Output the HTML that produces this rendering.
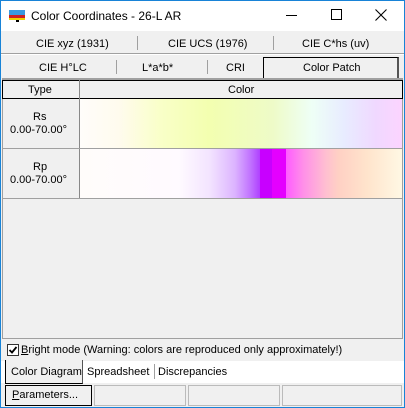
<!DOCTYPE html>
<html><head><style>
*{box-sizing:border-box;margin:0;padding:0}
body{width:405px;height:408px;background:#f0f0f0;font-family:"Liberation Sans",sans-serif;font-size:11px;color:#000;position:relative;overflow:hidden}
.abs{position:absolute}
.win{left:0;top:0;width:405px;height:408px;border:1px solid #1883d7}
.t{white-space:nowrap}
</style></head><body>
<div class="abs win"></div>
<div class="abs" style="left:1px;top:1px;width:403px;height:30px;background:#fff"></div>
<div class="abs" style="left:9px;top:10px;width:16px;height:5px;background:#3a9adf"></div>
<div class="abs" style="left:9px;top:15px;width:16px;height:3px;background:#d02020"></div>
<div class="abs" style="left:9px;top:18px;width:16px;height:2px;background:#f0d000"></div>
<div class="abs" style="left:16px;top:20px;width:3px;height:2px;background:#000"></div>
<div class="abs t" style="left:31px;top:9px;font-size:12px">Color Coordinates - 26-L AR</div>
<div class="abs" style="left:286px;top:15px;width:11px;height:1px;background:#000"></div>
<div class="abs" style="left:331px;top:9px;width:11px;height:11px;border:1px solid #000"></div>
<svg class="abs" style="left:375px;top:9px" width="12" height="12"><path d="M0.5 0.5L11.5 11.5M11.5 0.5L0.5 11.5" stroke="#000" stroke-width="1.1"/></svg>
<div class="abs t" style="left:36px;top:38px">CIE xyz (1931)</div>
<div class="abs" style="left:137px;top:36px;width:1px;height:14px;background:#a0a0a0"></div>
<div class="abs t" style="left:168px;top:38px">CIE UCS (1976)</div>
<div class="abs" style="left:273px;top:36px;width:1px;height:14px;background:#a0a0a0"></div>
<div class="abs t" style="left:302px;top:38px">CIE C*hs (uv)</div>
<div class="abs" style="left:1px;top:53px;width:403px;height:1px;background:#a0a0a0"></div>
<div class="abs" style="left:1px;top:54px;width:403px;height:1px;background:#fff"></div>
<div class="abs t" style="left:39px;top:62px">CIE H°LC</div>
<div class="abs" style="left:116px;top:60px;width:1px;height:14px;background:#a0a0a0"></div>
<div class="abs t" style="left:142px;top:62px">L*a*b*</div>
<div class="abs" style="left:207px;top:60px;width:1px;height:14px;background:#a0a0a0"></div>
<div class="abs t" style="left:226px;top:62px">CRI</div>
<div class="abs" style="left:263px;top:57px;width:136px;height:22px;border:1px solid #000;border-bottom:none;border-right:2px solid #555;background:#f0f0f0"></div>
<div class="abs t" style="left:303px;top:62px">Color Patch</div>
<div class="abs" style="left:2px;top:78px;width:401px;height:2px;background:#a0a0a0"></div>
<div class="abs" style="left:2px;top:80px;width:401px;height:19px;border:1px solid #000;background:#f0f0f0"></div>
<div class="abs" style="left:79px;top:80px;width:1px;height:119px;background:#888"></div>
<div class="abs t" style="left:28px;top:84px">Type</div>
<div class="abs t" style="left:228px;top:84px">Color</div>
<div class="abs" style="left:80px;top:99px;width:322px;height:49px;background:linear-gradient(90deg,#fffdfa 0%,#fffbee 12%,#f9ffc8 25%,#f3ffb0 40%,#eefbc8 60%,#eefff6 72%,#e8ecff 82%,#f0d8ff 92%,#fcd4ff 100%)"></div>
<div class="abs" style="left:2px;top:148px;width:400px;height:1px;background:#a0a0a0"></div>
<div class="abs" style="left:80px;top:149px;width:180px;height:49px;background:linear-gradient(90deg,#fffcfa 0%,#fffaff 55%,#f3e4ff 72%,#dcb4ff 86%,#c070ff 95%,#b040ff 100%)"></div>
<div class="abs" style="left:260px;top:149px;width:12px;height:49px;background:#c800ff"></div>
<div class="abs" style="left:272px;top:149px;width:14px;height:49px;background:#e400ff"></div>
<div class="abs" style="left:286px;top:149px;width:116px;height:49px;background:linear-gradient(90deg,#ff5cff 0%,#ff90e8 15%,#ffc0d0 35%,#ffd0c4 45%,#ffe4cc 70%,#fff8e4 100%)"></div>
<div class="abs" style="left:2px;top:198px;width:400px;height:1px;background:#a0a0a0"></div>
<div class="abs" style="left:2px;top:99px;width:1px;height:240px;background:#a0a0a0"></div>
<div class="abs" style="left:402px;top:99px;width:1px;height:240px;background:#a0a0a0"></div>
<div class="abs t" style="left:33px;top:111px">Rs</div>
<div class="abs t" style="left:10px;top:124px">0.00-70.00°</div>
<div class="abs t" style="left:33px;top:161px">Rp</div>
<div class="abs t" style="left:10px;top:174px">0.00-70.00°</div>
<div class="abs" style="left:2px;top:338px;width:401px;height:1px;background:#a0a0a0"></div>
<div class="abs" style="left:7px;top:344px;width:12px;height:12px;border:1px solid #333;background:#fff"></div>
<svg class="abs" style="left:8px;top:345px" width="10" height="10"><path d="M1.5 5L4 7.5L8.5 2" stroke="#000" stroke-width="1.8" fill="none"/></svg>
<div class="abs t" style="left:21px;top:344px"><u>B</u>right mode (Warning: colors are reproduced only approximately!)</div>
<div class="abs" style="left:1px;top:361px;width:403px;height:22px;background:#fff"></div>
<div class="abs" style="left:5px;top:360px;width:78px;height:24px;border:1px solid #000;border-top:none;border-right:1px solid #555;background:#f0f0f0"></div>
<div class="abs t" style="left:11px;top:366px">Color Diagram</div>
<div class="abs t" style="left:87px;top:366px">Spreadsheet</div>
<div class="abs" style="left:154px;top:364px;width:1px;height:15px;background:#a0a0a0"></div>
<div class="abs t" style="left:158px;top:366px">Discrepancies</div>
<div class="abs" style="left:5px;top:385px;width:87px;height:21px;border:1px solid #000;background:#f0f0f0"></div>
<div class="abs t" style="left:12px;top:389px"><u>P</u>arameters...</div>
<div class="abs" style="left:94px;top:385px;width:92px;height:21px;border:1px solid #bbb"></div>
<div class="abs" style="left:188px;top:385px;width:92px;height:21px;border:1px solid #bbb"></div>
<div class="abs" style="left:282px;top:385px;width:120px;height:21px;border:1px solid #bbb"></div>
</body></html>
